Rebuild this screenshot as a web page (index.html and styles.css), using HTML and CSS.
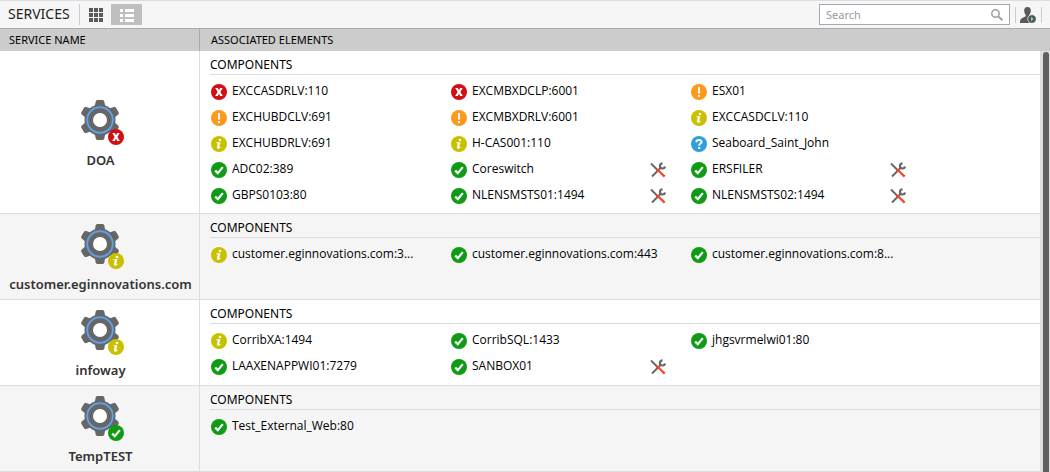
FILE: index.html
```html
<!DOCTYPE html>
<html lang="en">
<head>
    <meta charset="UTF-8">
    <meta name="viewport" content="width=device-width, initial-scale=1.0">
    <title>Services</title>
    <link rel="stylesheet" href="styles.css">
</head>
<body>

<!-- icon set -->
<svg class="sprite" aria-hidden="true">
    <symbol id="gear" viewBox="0 0 40 40">
        <g fill="#666">
            <circle cx="20" cy="20" r="15.500"/>
            <path id="teeth" d="M17 0h6l1.200 1 1 5h-10.400l1-5zM17 40h6l1.200-1 1-5h-10.400l1 5z"/>
            <use href="#teeth" transform="rotate(60 20 20)"/>
            <use href="#teeth" transform="rotate(120 20 20)"/>
        </g>
        <circle cx="20" cy="20" r="12.800" fill="none" stroke="#5f9fe6" stroke-width="2"/>
        <circle cx="20" cy="20" r="7" fill="#fff"/>
    </symbol>
    <symbol id="critical" viewBox="0 0 16 16">
        <circle cx="8" cy="8" r="8" fill="#d01013"/>
        <path d="M4.300 4h2.600L8 6.200 9.200 4h2.500L9.400 7.900l2.400 4.100H9.200L8 9.700 6.700 12H4.200l2.400-4.100z" fill="#fff"/>
    </symbol>
    <symbol id="major" viewBox="0 0 16 16">
        <circle cx="8" cy="8" r="8" fill="#fd9a1c"/>
        <path d="M7 3h2v6.500H7zM7 11h2v2H7z" fill="#fff"/>
    </symbol>
    <symbol id="minor" viewBox="0 0 16 16">
        <circle cx="8" cy="8" r="8" fill="#c9c000"/>
        <circle cx="9" cy="4" r="1.300" fill="#fff"/>
        <path d="M5.500 6.200h3.900L8.200 11.300l1.500-.5-.2 1c-1.500 1.200-4 1.300-3.600-.5L6.800 7.200H5.300z" fill="#fff"/>
    </symbol>
    <symbol id="unknown" viewBox="0 0 16 16">
        <circle cx="8" cy="8" r="8" fill="#2f9fdc"/>
        <path d="M5.300 6.200C5.400 3.200 10.700 3.300 10.600 5.900 10.500 7.600 8.100 7.500 8.100 9.700" fill="none" stroke="#fff" stroke-width="1.900"/>
        <path d="M7 11h2.200v2H7z" fill="#fff"/>
    </symbol>
    <symbol id="normal" viewBox="0 0 16 16">
        <circle cx="8" cy="8" r="8" fill="#0f9b14"/>
        <path d="M4.200 8.600l2.600 2.500 5-6" fill="none" stroke="#fff" stroke-width="2.200"/>
    </symbol>
    <symbol id="tools" viewBox="0 0 16 16">
        <path d="M1 1.500L8 8.500M2 14.500l9-9" stroke="#666" stroke-width="1.900"/>
        <path d="M12.500 1.300a2.600 2.600 0 1 0 2.600 3.200" fill="none" stroke="#666" stroke-width="2.200"/>
        <path d="M7 8.500l1.500-1.300 7 6.500-1.700 1.800z" fill="#f0492a"/>
        <circle cx="8" cy="8.500" r="1.800" fill="#f0492a"/>
    </symbol>
</svg>

<header class="toolbar">
    <h1>SERVICES</h1>
    <div class="views">
        <button type="button" class="view" aria-label="Grid view">
            <svg width="14" height="14" viewBox="0 0 14 14" fill="#5a5a5a"><path d="M0 0h4v4H0zM5 0h4v4H5zM10 0h4v4h-4zM0 5h4v4H0zM5 5h4v4H5zM10 5h4v4h-4zM0 10h4v4H0zM5 10h4v4H5zM10 10h4v4h-4z"/></svg>
        </button>
        <button type="button" class="view active" aria-label="List view">
            <svg width="14" height="14" viewBox="0 0 14 14" fill="#fff"><path d="M0 1h3v3H0zM5 1h9v3H5zM0 6h3v3H0zM5 6h9v3H5zM0 11h3v3H0zM5 11h9v3H5z"/></svg>
        </button>
    </div>
    <form class="search">
        <input type="text" placeholder="Search" aria-label="Search">
        <button type="button" aria-label="Find">
            <svg width="12" height="12" viewBox="0 0 12 12" fill="none" stroke="#a0a0a0"><circle cx="4.500" cy="4.500" r="3.700" stroke-width="1.500"/><path d="M7.500 7.500l4 3.800" stroke-width="2"/></svg>
        </button>
    </form>
    <button type="button" class="user" aria-label="User">
        <svg width="16" height="16" viewBox="0 0 16 16">
            <path d="M7.500 0c2.300 0 3.500 1.500 3.300 4-.1 2-.9 3-1.500 3.800v1.500l4 2V16H0c0-3 .6-4 2-4.700l3.700-2V7.800C5 7 4.300 6 4.200 4 4 1.500 5.200 0 7.500 0z" fill="#5a5a5a"/>
            <circle cx="12" cy="12" r="4.300" fill="#555" stroke="#f6f6f6" stroke-width=".7"/>
            <path d="M11 9.800l2.500 2.200-2.500 2.200z" fill="#8fd0f5"/>
        </svg>
    </button>
</header>

<main class="list">
    <table class="services">
        <thead>
            <tr><th scope="col">SERVICE NAME</th><th scope="col">ASSOCIATED ELEMENTS</th></tr>
        </thead>
        <tbody>
            <tr>
                <td class="service">
                    <div class="gear"><svg><use href="#gear"/></svg><svg class="badge"><use href="#critical"/></svg></div>
                    <div class="name">DOA</div>
                </td>
                <td class="elements">
                    <h2>COMPONENTS</h2>
                    <ul>
                        <li><svg><use href="#critical"/></svg><span>EXCCASDRLV:110</span></li>
                        <li><svg><use href="#critical"/></svg><span>EXCMBXDCLP:6001</span></li>
                        <li><svg><use href="#major"/></svg><span>ESX01</span></li>
                        <li><svg><use href="#major"/></svg><span>EXCHUBDCLV:691</span></li>
                        <li><svg><use href="#major"/></svg><span>EXCMBXDRLV:6001</span></li>
                        <li><svg><use href="#minor"/></svg><span>EXCCASDCLV:110</span></li>
                        <li><svg><use href="#minor"/></svg><span>EXCHUBDRLV:691</span></li>
                        <li><svg><use href="#minor"/></svg><span>H-CAS001:110</span></li>
                        <li><svg><use href="#unknown"/></svg><span>Seaboard_Saint_John</span></li>
                        <li><svg><use href="#normal"/></svg><span>ADC02:389</span></li>
                        <li><svg><use href="#normal"/></svg><span>Coreswitch</span><svg><use href="#tools"/></svg></li>
                        <li><svg><use href="#normal"/></svg><span>ERSFILER</span><svg><use href="#tools"/></svg></li>
                        <li><svg><use href="#normal"/></svg><span>GBPS0103:80</span></li>
                        <li><svg><use href="#normal"/></svg><span>NLENSMSTS01:1494</span><svg><use href="#tools"/></svg></li>
                        <li><svg><use href="#normal"/></svg><span>NLENSMSTS02:1494</span><svg><use href="#tools"/></svg></li>
                    </ul>
                </td>
            </tr>
            <tr>
                <td class="service">
                    <div class="gear"><svg><use href="#gear"/></svg><svg class="badge"><use href="#minor"/></svg></div>
                    <div class="name">customer.eginnovations.com</div>
                </td>
                <td class="elements">
                    <h2>COMPONENTS</h2>
                    <ul>
                        <li><svg><use href="#minor"/></svg><span>customer.eginnovations.com:3...</span></li>
                        <li><svg><use href="#normal"/></svg><span>customer.eginnovations.com:443</span></li>
                        <li><svg><use href="#normal"/></svg><span>customer.eginnovations.com:8...</span></li>
                    </ul>
                </td>
            </tr>
            <tr>
                <td class="service">
                    <div class="gear"><svg><use href="#gear"/></svg><svg class="badge"><use href="#minor"/></svg></div>
                    <div class="name">infoway</div>
                </td>
                <td class="elements">
                    <h2>COMPONENTS</h2>
                    <ul>
                        <li><svg><use href="#minor"/></svg><span>CorribXA:1494</span></li>
                        <li><svg><use href="#normal"/></svg><span>CorribSQL:1433</span></li>
                        <li><svg><use href="#normal"/></svg><span>jhgsvrmelwi01:80</span></li>
                        <li><svg><use href="#normal"/></svg><span>LAAXENAPPWI01:7279</span></li>
                        <li><svg><use href="#normal"/></svg><span>SANBOX01</span><svg><use href="#tools"/></svg></li>
                    </ul>
                </td>
            </tr>
            <tr>
                <td class="service">
                    <div class="gear"><svg><use href="#gear"/></svg><svg class="badge"><use href="#normal"/></svg></div>
                    <div class="name">TempTEST</div>
                </td>
                <td class="elements">
                    <h2>COMPONENTS</h2>
                    <ul>
                        <li><svg><use href="#normal"/></svg><span>Test_External_Web:80</span></li>
                    </ul>
                </td>
            </tr>
        </tbody>
    </table>
    <div class="scrollbar"><div class="thumb"></div></div>
</main>

</body>
</html>
```
FILE: styles.css
```css
* {
    box-sizing: border-box;
}
body {
    margin: 0;
    height: 100vh;
    display: flex;
    flex-direction: column;
    overflow: hidden;
    font-family: "Noto Sans", sans-serif;
    font-size: 11px;
    color: #000;
    background-color: #fff;
}
h1, h2, ul {
    margin: 0;
    padding: 0;
    font-weight: normal;
}
svg {
    display: block;
    flex: none;
}
button {
    padding: 0;
    border: none;
    background: none;
    cursor: pointer;
}
.sprite {
    position: absolute;
    width: 0;
    height: 0;
}

/* toolbar */
.toolbar {
    display: flex;
    align-items: center;
    height: 29px;
    padding: 0 8px;
    background-color: #f6f6f6;
    border-top: 1px solid #ddd;
    border-bottom: 1px solid #aaa;
}
.toolbar h1 {
    width: 71px;
    padding-bottom: 2px;
    font-size: 14px;
    line-height: 20px;
    color: #222;
}
.views {
    display: flex;
    border-left: 1px solid #ccc;
}
.view {
    display: flex;
    align-items: center;
    justify-content: center;
    width: 31px;
    height: 21px;
}
.view.active {
    background-color: #bfbfbf;
}
.search {
    display: flex;
    align-items: center;
    width: 191px;
    height: 21px;
    margin-left: auto;
    padding: 0 6px;
    border: 1px solid #a3a9bb;
    background-color: #fff;
}
.search input {
    flex: 1;
    min-width: 0;
    padding: 0;
    border: none;
    outline: none;
    font-family: inherit;
    font-size: 11px;
    background: none;
}
.search input::placeholder {
    color: #999;
}
.user {
    margin-left: 5px;
    padding: 0 5px 0 4px;
    border-left: 1px solid #ccc;
    border-right: 1px solid #ccc;
}

/* services table */
.list {
    flex: 1;
    display: flex;
    align-items: stretch;
    min-height: 0;
}
.services {
    flex: 1;
    table-layout: fixed;
    border-collapse: separate;
    border-spacing: 0;
}
.services th {
    height: 22px;
    padding: 0 11px;
    font-weight: normal;
    line-height: 16px;
    text-align: left;
    background-color: #ccc;
}
.services th:first-child {
    width: 200px;
    padding: 0 9px;
    border-right: 1px solid #aaa;
}
.services td {
    border-right: 1px solid #ddd;
    border-bottom: 1px solid #ddd;
}
.services tbody tr:nth-child(even) {
    background-color: #f5f5f5;
}
.service {
    padding: 10px 0 5px;
    vertical-align: middle;
    text-align: center;
}
.gear {
    position: relative;
    width: 40px;
    height: 40px;
    margin: 0 auto 10px;
}
.gear svg {
    width: 40px;
    height: 40px;
}
.gear .badge {
    position: absolute;
    right: -4px;
    bottom: -5px;
    width: 16px;
    height: 16px;
}
.name {
    padding-left: 2px;
    font-size: 13px;
    font-weight: 600;
    line-height: 20px;
    color: #333;
}
.elements {
    padding: 4px 0 4px 10px;
    vertical-align: top;
}
.elements h2 {
    font-size: 12px;
    line-height: 19px;
    border-bottom: 1px solid #ddd;
}
.elements ul {
    display: grid;
    grid-template-columns: repeat(auto-fill, 240px);
    padding: 4px 0 0 1px;
    list-style: none;
}
.elements li {
    display: flex;
    align-items: center;
    gap: 5px;
    height: 26px;
    padding-right: 25px;
}
.elements li svg {
    width: 16px;
    height: 16px;
}
.elements li span {
    flex: 1;
    min-width: 0;
    padding-bottom: 2px;
    font-family: "Open Sans", "Noto Sans", sans-serif;
    font-size: 12px;
    line-height: 16px;
    white-space: nowrap;
}

/* scrollbar */
.scrollbar {
    width: 9px;
    padding: 1px 1px 0 2px;
    border-top: 22px solid #ccc;
    background-color: #ddd;
}
.thumb {
    height: 100%;
    border-radius: 3px 3px 0 0;
    background-color: #5e5e5e;
}
```
